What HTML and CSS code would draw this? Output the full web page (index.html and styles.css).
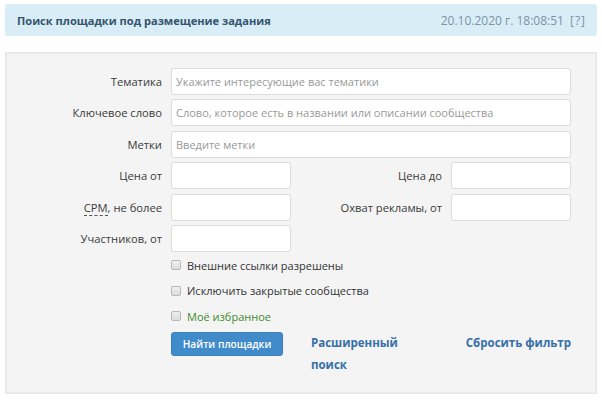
FILE: index.html
```html
<!DOCTYPE html>
<html lang="ru">
<head>
<meta charset="utf-8">
<title>Поиск площадки</title>
<link rel="stylesheet" href="styles.css">
</head>
<body>
<div class="page">
  <div class="header">
    <div class="title">Поиск площадки под размещение задания</div>
    <div class="meta"><span class="date">20.10.2020 г. 18:08:51</span><span class="help">[?]</span></div>
  </div>
  <div class="panel">
    <form class="form">
      <label class="lbl">Тематика</label>
      <input class="inp wide" type="text" placeholder="Укажите интересующие вас тематики">
      <label class="lbl">Ключевое слово</label>
      <input class="inp wide" type="text" placeholder="Слово, которое есть в названии или описании сообщества">
      <label class="lbl">Метки</label>
      <input class="inp wide" type="text" placeholder="Введите метки">

      <label class="lbl">Цена от</label>
      <input class="inp" type="text">
      <label class="lbl">Цена до</label>
      <input class="inp" type="text">

      <label class="lbl"><abbr class="abbr">CPM</abbr>, не более</label>
      <input class="inp" type="text">
      <label class="lbl">Охват рекламы, от</label>
      <input class="inp" type="text">

      <label class="lbl">Участников, от</label>
      <input class="inp" type="text">
      <span class="filler"></span>

      <div class="checks">
        <label class="check"><span class="box"></span>Внешние ссылки разрешены</label>
        <label class="check"><span class="box"></span>Исключить закрытые сообщества</label>
        <label class="check fav"><span class="box"></span>Моё избранное</label>
      </div>

      <button class="btn" type="button">Найти площадки</button>
      <a class="link adv" href="#">Расширенный поиск</a>
      <a class="link reset" href="#">Сбросить фильтр</a>
    </form>
  </div>
</div>
</body>
</html>
```
FILE: styles.css
```css
* { box-sizing: border-box; }
html, body { margin: 0; padding: 0; background: #fff; }
body {
  font-family: "Open Sans", "Noto Sans", sans-serif;
  font-size: 11.2px;
  color: #333;
}
.page { padding: 4px 5px 0 5px; }

.header {
  height: 32px;
  background: #d9edf7;
  border-radius: 3px;
  display: flex;
  align-items: center;
  justify-content: space-between;
  padding: 0 12px 0 12px;
}
.title {
  font-weight: 700;
  font-size: 11.1px;
  color: #34546f;
}
.meta {
  font-size: 12px;
  color: #7b93a8;
  display: flex;
  gap: 6px;
}
.help { letter-spacing: 1px; margin-right: -1px; }

.panel {
  margin-top: 16px;
  background: #f4f4f4;
  border: 1px solid #e6e6e6;
  box-shadow: inset 0 0 0 1px #ececec;
  padding: 15px 25px 17px 0;
}

.form {
  display: grid;
  grid-template-columns: 156px 120px 1fr 120px;
  column-gap: 9px;
  row-gap: 4.4px;
  align-items: center;
}
.lbl {
  text-align: right;
  color: #3a3a3a;
}
.abbr {
  text-decoration: none;
  border-bottom: 1px dashed #555;
}
.inp {
  height: 27px;
  border: 1px solid #dcdcdc;
  border-radius: 3px;
  background: #fff;
  padding: 0 4px;
  font-family: "Open Sans", "Noto Sans", sans-serif;
  font-size: 11px;
  color: #333;
  width: 100%;
}
.inp::placeholder { color: #999; }
.wide { grid-column: 2 / 5; }
.filler { grid-column: 3 / 5; }

.checks {
  grid-column: 2 / 5;
  display: flex;
  flex-direction: column;
  gap: 7.5px;
  padding-top: 0;
  padding-bottom: 2px;
  font-size: 11px;
}
.check {
  display: flex;
  align-items: center;
  gap: 6px;
  height: 18px;
  color: #333;
}
.box {
  width: 10px;
  height: 10px;
  border: 1px solid #b8b8b8;
  border-radius: 2px;
  background: linear-gradient(#f0f0f0, #dcdcdc);
}
.fav { color: #3c8c2c; }

.btn {
  grid-column: 2;
  align-self: start;
  width: 112px;
  height: 24px;
  border: 1px solid #3b80bd;
  border-radius: 3px;
  background: #418bcb;
  color: #fff;
  font-family: "Open Sans", "Noto Sans", sans-serif;
  font-size: 10.2px;
  font-weight: 600;
  padding: 0;
}
.link {
  align-self: start;
  color: #3670a8;
  font-weight: 700;
  font-size: 11.5px;
  text-decoration: none;
  line-height: 22px;
}
.adv {
  grid-column: 3;
  padding-left: 11px;
  width: 100px;
}
.reset {
  grid-column: 4;
  text-align: right;
}
```
